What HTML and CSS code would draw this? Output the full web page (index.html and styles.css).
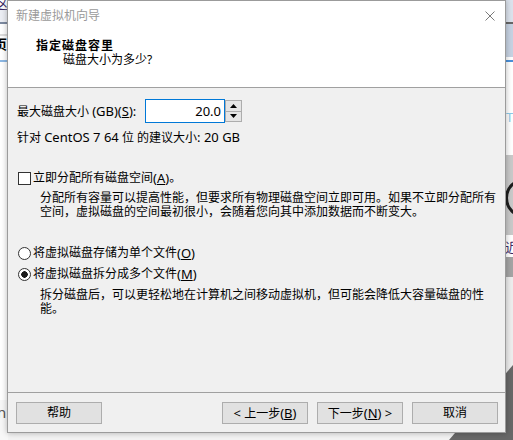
FILE: index.html
```html
<!DOCTYPE html>
<html>
    <head>
        <meta charset="utf-8">
        <title>新建虚拟机向导</title>
        <link rel="stylesheet" href="styles.css">
    </head>
    <body>
        <!-- the app behind the dialog, only its edges show -->
        <div class="backdrop">
            <div class="strip-left">
                <span class="bg-char bg-top">这</span>
                <span class="bg-char bg-page">页</span>
                <span class="bg-char bg-n">n</span>
            </div>
            <div class="strip-right">
                <span class="bg-char bg-t">T</span>
                <div class="bg-ring"></div>
                <span class="bg-char bg-near">近</span>
            </div>
            <div class="bg-corner"></div>
        </div>

        <div class="window">
            <div class="titlebar">
                <span class="title">新建虚拟机向导</span>
                <svg class="close" width="10" height="10" viewBox="0 0 10 10">
                    <path d="M0.5 0.5L9.5 9.5M9.5 0.5L0.5 9.5" stroke="#7a7a7a" stroke-width="1"/>
                </svg>
            </div>

            <div class="header">
                <div class="heading">指定磁盘容里</div>
                <div class="subheading">磁盘大小为多少?</div>
            </div>

            <div class="content">
                <div class="size-row">
                    <label class="size-label" for="size">最大磁盘大小 <span class="lat">(GB)(<u>S</u>):</span></label>
                    <input id="size" class="size-input" type="text" value="20.0">
                    <div class="spinner">
                        <button class="spin">
                            <svg width="7" height="4" viewBox="0 0 7 4"><path d="M3.5 0L7 4H0z" fill="#000"/></svg>
                        </button>
                        <button class="spin">
                            <svg width="7" height="4" viewBox="0 0 7 4"><path d="M0 0H7L3.5 4z" fill="#000"/></svg>
                        </button>
                    </div>
                </div>

                <div class="hint">针对 <span class="lat">CentOS 7 64</span> 位 的建议大小<span class="lat">: 20 GB</span></div>

                <label class="option check-option"><span class="checkbox"></span>立即分配所有磁盘空间<span class="lat">(<u>A</u>)</span>。</label>
                <p class="desc">分配所有容量可以提高性能，但要求所有物理磁盘空间立即可用。如果不立即分配所有<br>空间，虚拟磁盘的空间最初很小，会随着您向其中添加数据而不断变大。</p>

                <label class="option radio-first"><span class="radio"></span>将虚拟磁盘存储为单个文件<span class="lat">(<u>O</u>)</span></label>
                <label class="option radio-second"><span class="radio checked"></span>将虚拟磁盘拆分成多个文件<span class="lat">(<u>M</u>)</span></label>
                <p class="desc desc-split">拆分磁盘后，可以更轻松地在计算机之间移动虚拟机，但可能会降低大容量磁盘的性<br>能。</p>
            </div>

            <div class="footer">
                <button class="btn">帮助</button>
                <div class="nav">
                    <button class="btn"><span class="lat">&lt;</span> 上一步<span class="lat">(<u>B</u>)</span></button>
                    <button class="btn">下一步<span class="lat">(<u>N</u>) &gt;</span></button>
                    <button class="btn">取消</button>
                </div>
            </div>
        </div>
    </body>
</html>
```

FILE: styles.css
```css
*{
    box-sizing: border-box;
}

body{
    margin: 0;
    width: 513px;
    height: 440px;
    overflow: hidden;
    position: relative;
    background: #f3f3f3;
    font-family: "Noto Sans", "Noto Sans CJK SC", sans-serif;
    font-size: 12px;
    line-height: 14px;
    color: #000;
}

.lat{
    font-size: 13px;
}

u{
    text-underline-offset: 1px;
}

/* background window, mostly hidden */
.backdrop{
    position: absolute;
    inset: 0;
    overflow: hidden;
}
.strip-left{
    position: absolute;
    left: 0;
    top: 0;
    width: 8px;
    height: 440px;
    overflow: hidden;
    background: linear-gradient(to bottom,
        #ffffff 0 9px,
        #eceef4 9px 22px,
        #7d8aa0 22px 24px,
        #ffffff 24px 34px,
        #dcdcdc 34px 36px,
        #ffffff 36px 60px,
        #8db8e4 60px 62px,
        #ffffff 62px 400px,
        #f7f7f7 400px);
}
.strip-right{
    position: absolute;
    left: 506px;
    top: 0;
    width: 7px;
    height: 440px;
    overflow: hidden;
    background: linear-gradient(to bottom,
        #dbe2ec 0 22px,
        #666666 22px 24px,
        #c6d2e2 24px 57px,
        #ffffff 57px 60px,
        #4a90d9 60px 62px,
        #ffffff 62px 155px,
        #c9c9c9 155px 235px,
        #ffffff 235px 257px,
        #a4a4a4 257px 277px,
        #ededed 277px);
}
.bg-char{
    position: absolute;
    font-size: 13px;
    line-height: 14px;
}
.bg-top{
    left: -5px;
    top: -4px;
    color: #3b2a66;
}
.bg-page{
    left: -6px;
    top: 37px;
    font-weight: bold;
}
.bg-n{
    left: -3px;
    top: 405px;
    font-size: 15px;
    color: #555;
}
.bg-t{
    left: 0;
    top: 110px;
    color: #8ccbe8;
}
.bg-near{
    left: -1px;
    top: 240px;
    color: #3b2a66;
}
.bg-ring{
    position: absolute;
    left: -1px;
    top: 178px;
    width: 40px;
    height: 40px;
    border: 3px solid #1e1e1e;
    border-radius: 50%;
}
.bg-corner{
    position: absolute;
    right: 0;
    bottom: 0;
    width: 64px;
    height: 75px;
    background: #686868;
    clip-path: polygon(100% 0, 100% 100%, 0 100%);
}

/* the dialog */
.window{
    position: relative;
    z-index: 1;
    margin-left: 7px;
    width: 499px;
    height: 433px;
    border: 1px solid #9b9b9b;
    background: #f0f0f0;
    box-shadow: 0 0 6px rgba(0, 0, 0, 0.28);
    display: flex;
    flex-direction: column;
}

.titlebar{
    height: 30px;
    padding: 0 10px 0 8px;
    display: flex;
    align-items: center;
    justify-content: space-between;
    background: #fff;
    color: #9a9a9a;
}
.close{
    display: block;
}

.header{
    height: 57px;
    padding: 8px 0 0 28px;
    background: #fff;
    border-bottom: 1px solid #a0a0a0;
}
.heading{
    font-weight: bold;
    letter-spacing: 1px;
}
.subheading{
    padding-left: 27px;
}

.content{
    height: 304px;
    padding: 11px 0 0 9px;
}

.size-row{
    display: flex;
    align-items: center;
    height: 24px;
}
.size-label{
    width: 128px;
}
.size-input{
    width: 80px;
    height: 24px;
    margin: 0;
    padding: 0 3px 0 0;
    border: 1px solid #0078d7;
    background: #fff;
    text-align: right;
    font-family: inherit;
    font-size: 13px;
    color: #000;
    outline: none;
}
.spinner{
    width: 17px;
    height: 24px;
    padding: 1px 0;
    display: flex;
    flex-direction: column;
}
.spin{
    flex: 1;
    margin: 0;
    padding: 0;
    border: 1px solid #adadad;
    background: #e5e5e5;
    display: flex;
    align-items: center;
    justify-content: center;
}
.spin + .spin{
    border-top: none;
}
.spin svg{
    display: block;
}

.hint{
    margin-top: 7px;
}

.option{
    display: flex;
    align-items: center;
    height: 14px;
    margin-left: 1px;
    white-space: nowrap;
}
.checkbox, .radio{
    width: 13px;
    height: 13px;
    margin-right: 2px;
    border: 1px solid #333;
    background: #fff;
    flex: none;
}
.radio{
    border-radius: 50%;
}
.radio.checked{
    background: radial-gradient(circle, #1a1a1a 0 3px, #fff 3.5px);
}
.check-option{
    margin-top: 26px;
}
.radio-first{
    margin-top: 27px;
}
.radio-second{
    margin-top: 7px;
}

.desc{
    margin: 6px 0 0;
    padding-left: 23px;
    white-space: nowrap;
}
.desc-split{
    margin-top: 7px;
}

.footer{
    height: 40px;
    padding: 9px 7px 0 8px;
    border-top: 1px solid #a0a0a0;
    display: flex;
    justify-content: space-between;
    align-items: flex-start;
}
.nav{
    display: flex;
    gap: 9px;
}
.btn{
    width: 86px;
    height: 22px;
    margin: 0;
    padding: 0;
    border: 1px solid #adadad;
    background: #e1e1e1;
    font-family: inherit;
    font-size: 12px;
    line-height: 14px;
    color: #000;
}
```
